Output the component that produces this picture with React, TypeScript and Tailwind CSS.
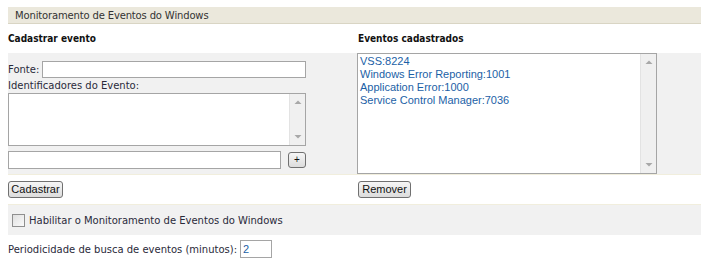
import React from "react";

const verdana = { fontFamily: '"DejaVu Sans", Verdana, sans-serif' };
const arial = { fontFamily: '"Liberation Sans", Arial, sans-serif' };
const bold = { fontFamily: '"DejaVu Sans Condensed", "DejaVu Sans", Tahoma, sans-serif' };

function ScrollBar() {
  return (
    <div className="flex w-[16px] flex-col justify-between border-l border-[#e3e3e3] bg-[#f0f0f0] py-[4px]">
      <svg width="16" height="8" viewBox="0 0 16 8">
        <path d="M4.5 6 L8 2.5 L11.5 6 Z" fill="#a8a8a8" />
      </svg>
      <svg width="16" height="8" viewBox="0 0 16 8">
        <path d="M4.5 2 L8 5.5 L11.5 2 Z" fill="#a8a8a8" />
      </svg>
    </div>
  );
}

function Btn({ children, w }: { children: React.ReactNode; w: string }) {
  return (
    <div
      className={`flex h-[17px] ${w} items-center justify-center rounded-[3px] border border-[#707070] bg-gradient-to-b from-[#f6f6f6] to-[#dcdcdc] text-[11px] leading-none text-[#111]`}
      style={arial}
    >
      {children}
    </div>
  );
}

export default function App() {
  return (
    <div className="h-[273px] w-[709px] bg-white pl-[8px] text-[10px] text-[#2a2a3a]" style={verdana}>
      <div className="h-[7px]" />
      <div className="flex h-[17px] w-[693px] items-center border-b border-[#d9d5c4] bg-[#ebe8dc] pl-[7px] text-[10px] tracking-[-0.15px] text-[#333]">
        Monitoramento de Eventos do Windows
      </div>
      <div className="flex h-[29px] w-[693px] items-center text-[10px] font-bold text-[#111]" style={bold}>
        <div className="w-[350px]">Cadastrar evento</div>
        <div>Eventos cadastrados</div>
      </div>
      <div className="flex h-[122px] w-[693px] border-b border-[#f1eedd] bg-[#f1f1f1]">
        <div className="flex w-[349px] flex-col pt-[8px]">
          <div className="flex h-[17px] items-center">
            <span className="w-[34px]">Fonte:</span>
            <div className="h-[17px] w-[264px] border border-[#a5a5a5] bg-white" />
          </div>
          <div className="mt-[2px] h-[12px] leading-[12px]">Identificadores do Evento:</div>
          <div className="mt-[1px] flex h-[53px] w-[298px] border border-[#a5a5a5] bg-white">
            <div className="flex-1" />
            <ScrollBar />
          </div>
          <div className="mt-[5px] flex items-center">
            <div className="h-[18px] w-[273px] border border-[#a5a5a5] bg-white" />
            <div className="ml-[7px] flex h-[16px] w-[18px] items-center justify-center rounded-[3px] border border-[#707070] bg-gradient-to-b from-[#f6f6f6] to-[#dcdcdc] text-[10px] leading-none text-[#111]" style={arial}>
              +
            </div>
          </div>
        </div>
        <div className="flex h-[121px] w-[300px] border border-[#a5a5a5] bg-white">
          <div className="flex-1 pl-[2px] pt-[1px] text-[11px] leading-[13px] text-[#1c5fa6]" style={arial}>
            <div>VSS:8224</div>
            <div>Windows Error Reporting:1001</div>
            <div>Application Error:1000</div>
            <div>Service Control Manager:7036</div>
          </div>
          <ScrollBar />
        </div>
      </div>
      <div className="flex h-[29px] w-[693px] items-center">
        <div className="w-[350px]">
          <Btn w="w-[55px]">Cadastrar</Btn>
        </div>
        <Btn w="w-[53px]">Remover</Btn>
      </div>
      <div className="flex h-[31px] w-[693px] items-center border-t border-[#f1eedd] bg-[#f1f1f1] pl-[4px]">
        <div className="h-[13px] w-[13px] border border-[#8f8f8f] bg-gradient-to-br from-[#e0e0e0] to-[#fafafa]" />
        <span className="ml-[4px] text-[10px]">Habilitar o Monitoramento de Eventos do Windows</span>
      </div>
      <div className="flex h-[18px] items-center mt-[5px]">
        <span>Periodicidade de busca de eventos (minutos):</span>
        <div className="ml-[3px] flex h-[18px] w-[32px] items-center border border-[#a5a5a5] bg-white pl-[2px] text-[11px] text-[#1c5fa6]" style={arial}>
          2
        </div>
      </div>
    </div>
  );
}
